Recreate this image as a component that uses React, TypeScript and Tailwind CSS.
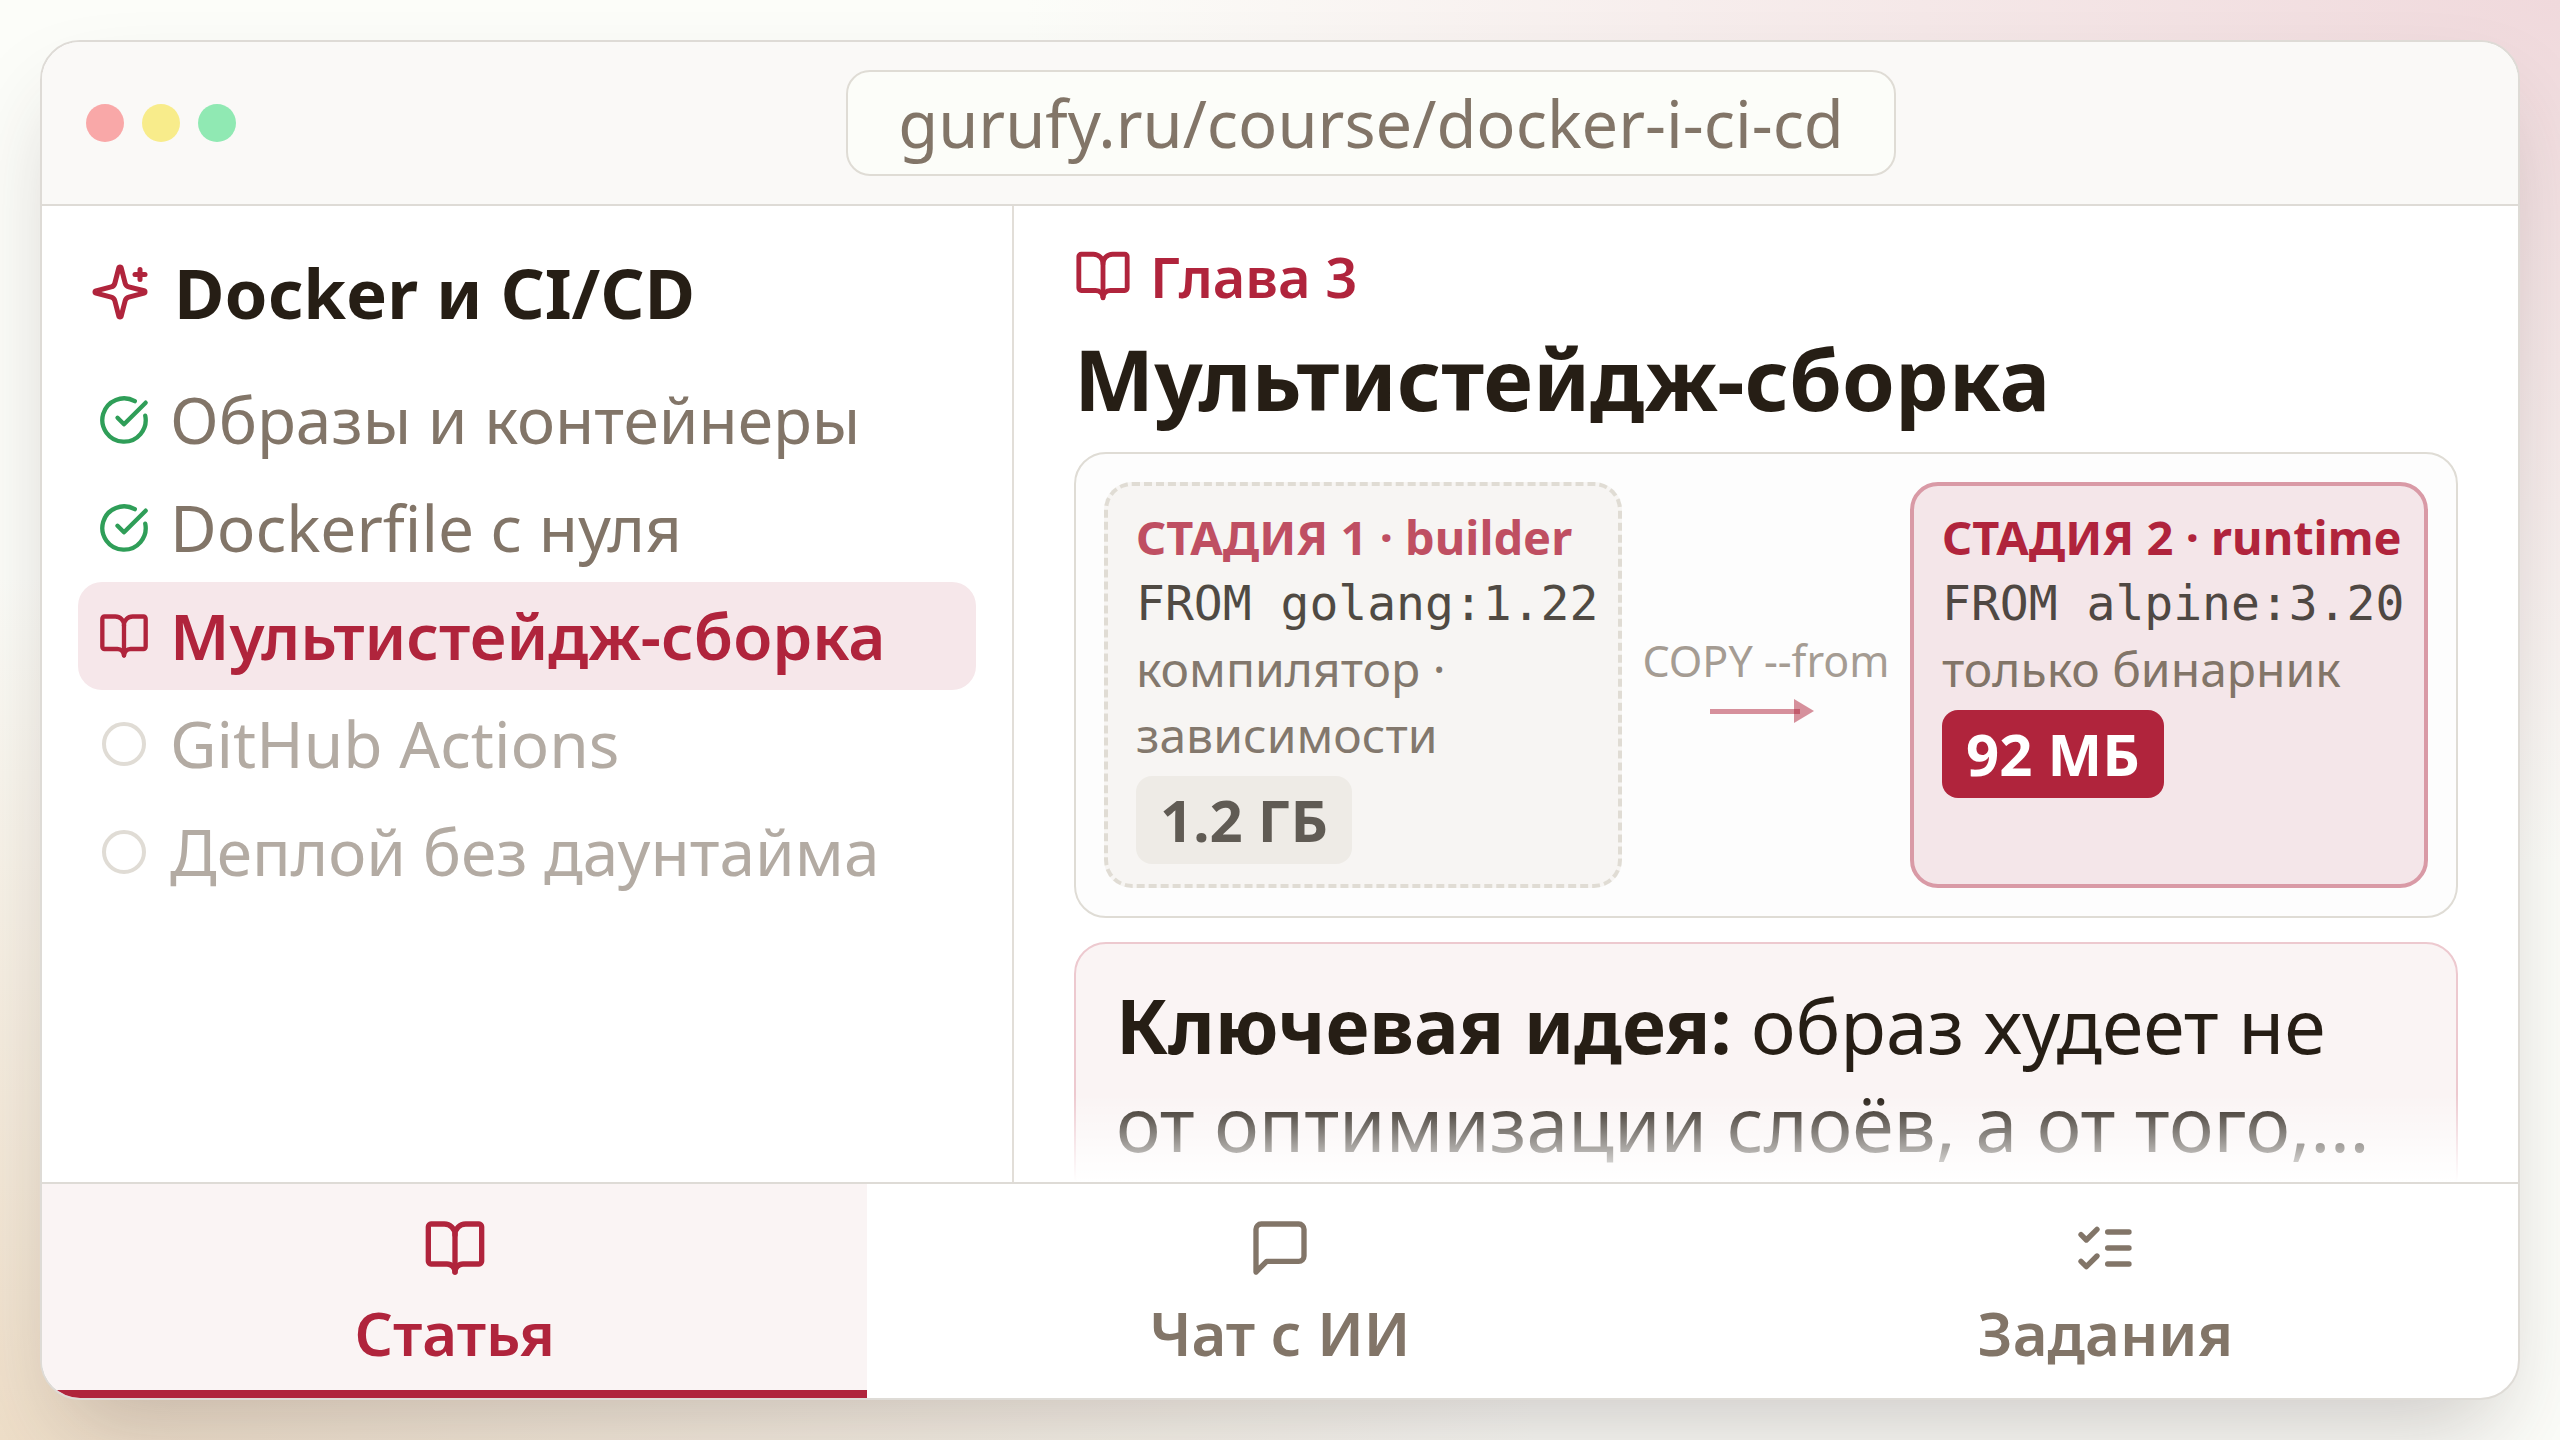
import { ReactNode, useState } from 'react';
import { BookOpen, CircleCheckBig } from 'lucide-react';

type LessonStatus = 'done' | 'active' | 'locked';

const lessons: { title: string; status: LessonStatus }[] = [
  { title: 'Образы и контейнеры', status: 'done' },
  { title: 'Dockerfile с нуля', status: 'done' },
  { title: 'Мультистейдж-сборка', status: 'active' },
  { title: 'GitHub Actions', status: 'locked' },
  { title: 'Деплой без даунтайма', status: 'locked' },
];

const lessonStyles: Record<LessonStatus, string> = {
  done: 'text-[#827568]',
  active: 'bg-[#f6e7ea] font-semibold text-[#b0243c]',
  locked: 'text-[#b3aba3]',
};

function Icon({ className, children }: { className: string; children: ReactNode }) {
  return (
    <svg
      viewBox="0 0 24 24"
      fill="none"
      stroke="currentColor"
      strokeWidth={2}
      strokeLinecap="round"
      strokeLinejoin="round"
      className={className}
      aria-hidden="true"
    >
      {children}
    </svg>
  );
}

function SparkleIcon() {
  return (
    <Icon className="size-[60px] shrink-0 text-[#b0243c]">
      <path d="M9.937 15.5A2 2 0 0 0 8.5 14.063l-6.135-1.582a.5.5 0 0 1 0-.962L8.5 9.936A2 2 0 0 0 9.937 8.5l1.582-6.135a.5.5 0 0 1 .963 0L14.063 8.5A2 2 0 0 0 15.5 9.937l6.135 1.581a.5.5 0 0 1 0 .964L15.5 14.063a2 2 0 0 0-1.437 1.437l-1.582 6.135a.5.5 0 0 1-.963 0z" />
      <path d="M20 3v4" />
      <path d="M22 5h-4" />
    </Icon>
  );
}

const tabs = [
  {
    id: 'article',
    label: 'Статья',
    icon: <BookOpen className="size-16" />,
  },
  {
    id: 'chat',
    label: 'Чат с ИИ',
    icon: (
      <Icon className="size-16">
        <path d="M21 15a2 2 0 0 1-2 2H7l-4 4V5a2 2 0 0 1 2-2h14a2 2 0 0 1 2 2z" />
      </Icon>
    ),
  },
  {
    id: 'tasks',
    label: 'Задания',
    icon: (
      <Icon className="size-16">
        <path d="m3 17 2 2 4-4" />
        <path d="m3 7 2 2 4-4" />
        <path d="M13 6h8" />
        <path d="M13 12h8" />
        <path d="M13 18h8" />
      </Icon>
    ),
  },
];

function LessonIcon({ status }: { status: LessonStatus }) {
  if (status === 'done') return <CircleCheckBig className="size-[52px] shrink-0 text-[#2f9e58]" />;
  if (status === 'active') return <BookOpen className="size-[52px] shrink-0" />;
  return <span className="m-1 size-11 shrink-0 rounded-full border-4 border-[#e0dcd5]" />;
}

function BrowserBar() {
  return (
    <header className="flex items-center gap-8 border-b-2 border-[#dedbd6] bg-[#faf9f7] px-11 py-7">
      <div className="flex gap-[18px]">
        <span className="size-[38px] rounded-full bg-[#f9a8a8]" />
        <span className="size-[38px] rounded-full bg-[#f8ec8b]" />
        <span className="size-[38px] rounded-full bg-[#90e9b3]" />
      </div>
      <div className="flex flex-1 justify-center">
        <div className="rounded-3xl border-2 border-[#dfdcd5] bg-[#fcfdf9] px-[50px] text-[65px] leading-[102px] text-[#827568]">
          gurufy.ru/course/docker-i-ci-cd
        </div>
      </div>
    </header>
  );
}

function Sidebar() {
  return (
    <aside className="border-r-2 border-[#e2ded8] px-9 pt-10">
      <div className="flex items-center gap-6 px-3">
        <SparkleIcon />
        <h2 className="text-[69px] leading-[92px] font-bold text-[#261e15]">Docker и CI/CD</h2>
      </div>
      <nav className="mt-7">
        {lessons.map((lesson) => (
          <a
            key={lesson.title}
            href="#"
            className={`flex items-center gap-5 rounded-3xl px-5 text-[64px] leading-[108px] ${lessonStyles[lesson.status]}`}
          >
            <LessonIcon status={lesson.status} />
            {lesson.title}
          </a>
        ))}
      </nav>
    </aside>
  );
}

function StageDiagram() {
  return (
    <div className="mt-5 flex items-stretch rounded-[32px] border-2 border-[#dfdcd5] bg-[#fdfdfd] p-7">
      <div className="w-[518px] rounded-[28px] border-4 border-dashed border-[#dad5cb] bg-[#f6f4f1] px-7 pt-[18px] pb-5 text-5xl leading-[66px] opacity-80">
        <div className="text-[47px] leading-[66px] font-bold whitespace-nowrap text-[#b0243c]">СТАДИЯ 1 · builder</div>
        <div className="font-['DejaVu_Sans_Mono',monospace] leading-[66px] whitespace-nowrap text-[#261e15]">
          FROM golang:1.22
        </div>
        <div className="text-[#65584a]">
          компилятор ·<br />
          зависимости
        </div>
        <span className="mt-2 inline-block rounded-2xl bg-[#ebe7e1] px-6 text-[58px] leading-[88px] font-bold text-[#39332b]">
          1.2 ГБ
        </span>
      </div>
      <div className="flex flex-1 flex-col items-center justify-center pb-4">
        <div className="text-[43px] leading-[60px] whitespace-nowrap text-[#a59c93]">COPY --from</div>
        <svg viewBox="0 0 112 24" className="mt-2 h-6 w-28" fill="#b0243c" aria-hidden="true">
          <path d="M0 10h90v5H0z" opacity="0.5" />
          <path d="M84 0l20 12-20 12z" opacity="0.5" />
        </svg>
      </div>
      <div className="w-[518px] rounded-[28px] border-4 border-[#d99aa6] bg-[#f4e6e9] px-7 pt-[18px] pb-5 text-5xl leading-[66px]">
        <div className="text-[47px] leading-[66px] font-bold whitespace-nowrap text-[#b0243c]">СТАДИЯ 2 · runtime</div>
        <div className="font-['DejaVu_Sans_Mono',monospace] leading-[66px] whitespace-nowrap text-[#4f4843]">
          FROM alpine:3.20
        </div>
        <div className="text-[#827568]">только бинарник</div>
        <span className="mt-2 inline-block rounded-2xl bg-[#b0243c] px-6 text-[58px] leading-[88px] font-bold text-white">
          92 МБ
        </span>
      </div>
    </div>
  );
}

function Article() {
  return (
    <main className="relative min-h-0 overflow-hidden px-15 pt-[34px]">
      <div className="flex items-center gap-[18px] text-[#b0243c]">
        <BookOpen className="size-[58px]" />
        <span className="text-[56px] leading-[72px] font-semibold">Глава 3</span>
      </div>
      <h1 className="mt-3 text-[85px] leading-[108px] font-bold whitespace-nowrap text-[#261e15]">
        Мультистейдж-сборка
      </h1>
      <StageDiagram />
      <div className="mt-6 rounded-[32px] border-2 border-[#edc9cf] bg-[#faf4f4] px-10 py-8 text-[75px] leading-[98px] whitespace-nowrap text-[#261e15]">
        <strong>Ключевая идея:</strong> образ худеет не
        <br />
        от оптимизации слоёв, а от того,…
      </div>
      <div className="absolute inset-x-0 bottom-0 h-22 bg-linear-to-b from-white/0 to-white" />
    </main>
  );
}

export default function App() {
  const [activeTab, setActiveTab] = useState('article');

  return (
    <div className="h-screen bg-[#fcfdf9] bg-[radial-gradient(ellipse_60%_60%_at_100%_0%,#f0d9dc,transparent),radial-gradient(ellipse_60%_60%_at_0%_100%,#efdfc9,transparent)] p-10 font-['Noto_Sans',sans-serif]">
      <div className="flex h-full flex-col overflow-hidden rounded-[40px] border-2 border-[#dedbd6] bg-white shadow-[0_48px_96px_-24px_rgba(60,40,40,0.25)]">
        <BrowserBar />
        <div className="grid min-h-0 flex-1 grid-cols-[243fr_376fr]">
          <Sidebar />
          <Article />
        </div>
        <div className="grid grid-cols-[1fr_1fr_1fr] border-t-2 border-[#dedbd6]">
          {tabs.map((tab) => (
            <button
              key={tab.id}
              type="button"
              onClick={() => setActiveTab(tab.id)}
              className={`flex flex-col items-center gap-[14px] border-b-8 pt-8 pb-[18px] text-[60px] leading-[78px] font-semibold ${
                activeTab === tab.id
                  ? 'border-[#b0243c] bg-[#faf4f4] text-[#b0243c]'
                  : 'border-transparent text-[#827568]'
              }`}
            >
              {tab.icon}
              {tab.label}
            </button>
          ))}
        </div>
      </div>
    </div>
  );
}
